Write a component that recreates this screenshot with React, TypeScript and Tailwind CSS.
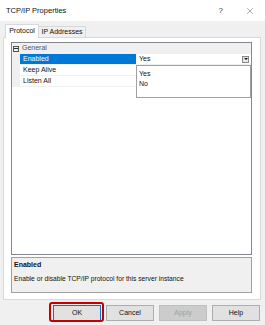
import { X } from 'lucide-react'

const rows = [
  { name: 'Enabled', value: 'Yes', selected: true },
  { name: 'Keep Alive', value: '' },
  { name: 'Listen All', value: '' },
]

function Btn({ label, primary, disabled }: { label: string; primary?: boolean; disabled?: boolean }) {
  return (
    <div
      className={
        'relative w-[48px] h-[16px] flex items-center justify-center border text-[7px] ' +
        (disabled
          ? 'bg-[#cccccc] border-[#bfbfbf] text-[#a0a0a0]'
          : primary
          ? 'bg-[#e1e1e1] border-[#0078d7] text-[#111]'
          : 'bg-[#e1e1e1] border-[#adadad] text-[#111]')
      }
    >
      {label}
      {primary && (
        <span className="absolute -left-[5px] -right-[4px] -top-[4px] -bottom-[2px] border-2 border-[#c40000] rounded-[3px]" />
      )}
    </div>
  )
}

export default function App() {
  return (
    <div
      className="w-[266px] h-[325px] bg-[#f0f0f0] border-r border-[#cfcfcf] flex flex-col overflow-hidden text-[#111]"
      style={{ fontFamily: '"Liberation Sans", Arial, sans-serif' }}
    >
      {/* title bar */}
      <div className="h-[21px] bg-white flex items-center pl-[6px] pr-[10px] text-[7.5px] shrink-0">
        <span className="flex-1">TCP/IP Properties</span>
        <span className="text-[8px] text-[#333] mr-[22px]">?</span>
        <X size={10} strokeWidth={1} className="text-[#333]" />
      </div>

      <div className="flex flex-col pl-[3px] pr-[4px] pt-[2px]">
        {/* tabs */}
        <div className="flex items-end h-[14px] pl-[2px] text-[7px]">
          <div className="h-[14px] w-[34px] bg-white border border-b-0 border-[#d9d9d9] flex items-center justify-center relative z-10 -mb-px pb-px">
            Protocol
          </div>
          <div className="h-[11px] w-[47px] bg-[#f0f0f0] border border-l-0 border-b-0 border-[#d9d9d9] flex items-center justify-center">
            IP Addresses
          </div>
        </div>

        {/* tab panel */}
        <div className="h-[263px] bg-white border border-[#d9d9d9] pt-[4px] pl-[7px] pr-[8px] flex flex-col">
          {/* property grid */}
          <div className="relative h-[213px] border border-[#828790] bg-white text-[7px]">
            <div className="h-[11px] bg-[#f0f0f0] flex items-center">
              <div className="w-[8px] flex justify-center">
                <div className="w-[6px] h-[6px] border border-[#555] flex items-center justify-center">
                  <div className="w-[4px] h-px bg-[#333]" />
                </div>
              </div>
              <span className="pl-[2px] text-[#555]">General</span>
            </div>
            {rows.map((r) => (
              <div key={r.name} className="h-[11px] flex">
                <div className="w-[8px] bg-[#f0f0f0]" />
                <div
                  className={
                    'w-[116px] flex items-center pl-[3px] border-b border-[#f0f0f0] ' +
                    (r.selected ? 'bg-[#0078d7] text-white' : '')
                  }
                >
                  {r.name}
                </div>
                <div className="flex-1 flex items-center pl-[2px] border-l border-b border-[#f0f0f0]">
                  <span className="flex-1">{r.value}</span>
                  {r.selected && (
                    <div className="w-[7px] h-[7px] mr-[2px] border border-[#888] bg-[#e8e8e8] flex items-center justify-center">
                      <div className="w-0 h-0 border-l-[2px] border-r-[2px] border-t-[2px] border-l-transparent border-r-transparent border-t-[#111]" />
                    </div>
                  )}
                </div>
              </div>
            ))}

            {/* dropdown list */}
            <div className="absolute left-[124px] right-0 top-[22px] h-[33px] bg-white border border-[#a0a0a0] flex flex-col pt-[3px] pl-[2px]">
              <div className="h-[10px] flex items-center">Yes</div>
              <div className="h-[10px] flex items-center">No</div>
            </div>
          </div>

          {/* description */}
          <div className="mt-[2px] h-[36px] bg-[#f0f0f0] border border-[#a0a0a0] px-[2px] pt-[2px] text-[7px]">
            <div className="font-bold">Enabled</div>
            <div className="mt-[3px] text-[6.7px]">Enable or disable TCP/IP protocol for this server instance</div>
          </div>
        </div>

        {/* buttons */}
        <div className="flex justify-end gap-[5px] mt-[5px] pr-[1px]">
          <Btn label="OK" primary />
          <Btn label="Cancel" />
          <Btn label="Apply" disabled />
          <Btn label="Help" />
        </div>
      </div>
    </div>
  )
}
